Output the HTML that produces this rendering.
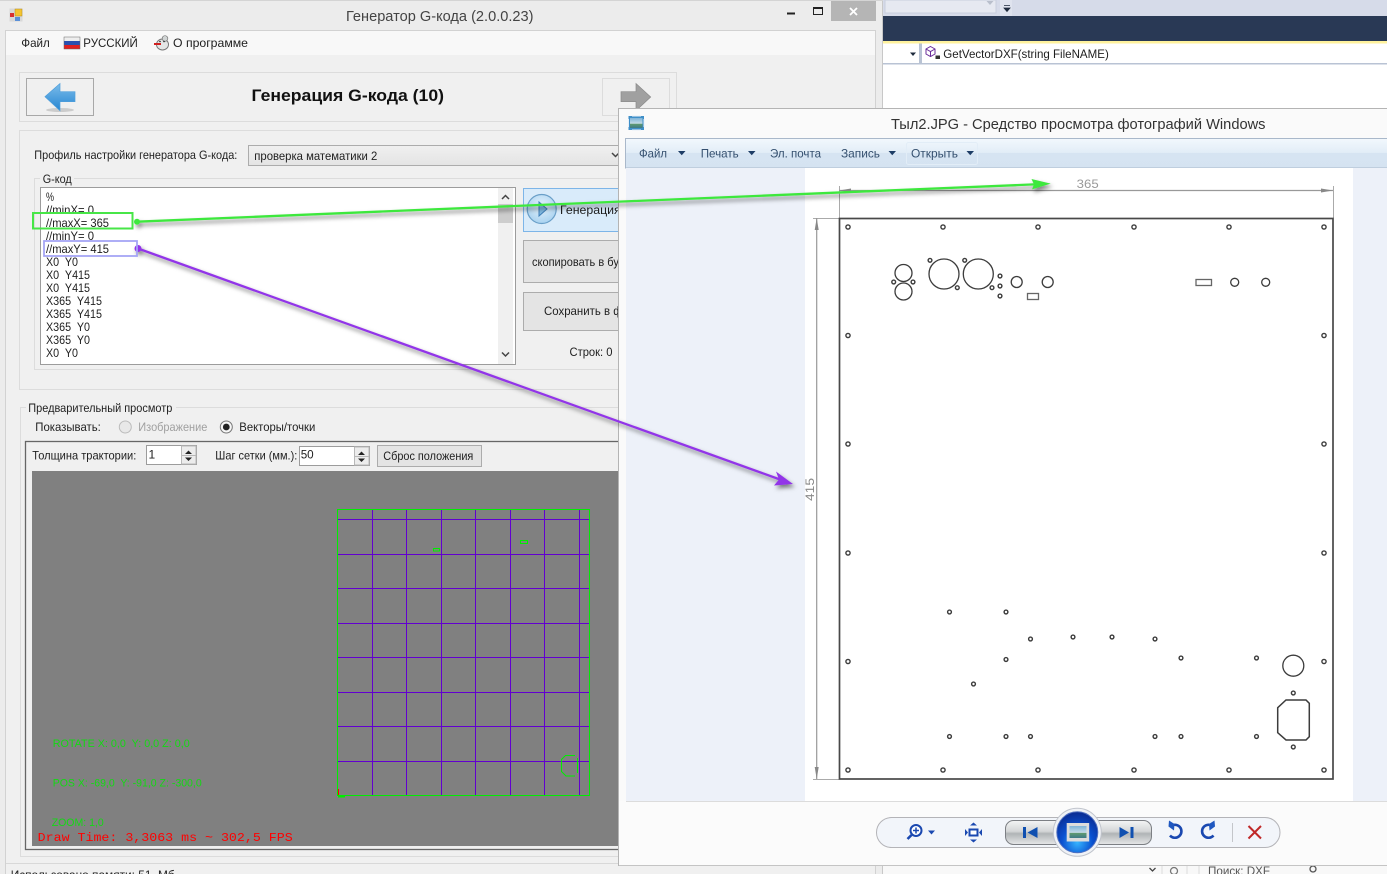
<!DOCTYPE html>
<html lang="ru"><head><meta charset="utf-8"><title>Генератор G-кода</title>
<style>
html,body{margin:0;padding:0;background:#fff;overflow:hidden}
svg{display:block;position:absolute;left:0;top:0}
text{font-family:"Liberation Sans","DejaVu Sans",sans-serif;font-size:12px;fill:#1e1e1e;white-space:pre}
.l{font-size:12px}
.m{fill:#35506f;font-size:12px}
.g{fill:#00e800;font-size:11px;opacity:.85}
</style></head><body>
<svg width="1387" height="874" viewBox="0 0 1387 874" xmlns="http://www.w3.org/2000/svg">
<defs>
<linearGradient id="tb" x1="0" y1="0" x2="0" y2="1"><stop offset="0" stop-color="#f2f8fd"/><stop offset=".48" stop-color="#e2edf7"/><stop offset=".5" stop-color="#d6e4f2"/><stop offset="1" stop-color="#d5e3f1"/></linearGradient>
<linearGradient id="cb" x1="0" y1="0" x2="0" y2="1"><stop offset="0" stop-color="#f0f0f0"/><stop offset="1" stop-color="#e4e4e4"/></linearGradient>
<linearGradient id="ar" x1="0" y1="0" x2="0" y2="1"><stop offset="0" stop-color="#7cbdea"/><stop offset="1" stop-color="#2585d2"/></linearGradient>
<linearGradient id="nav" x1="0" y1="0" x2="0" y2="1"><stop offset="0" stop-color="#f4f5f5"/><stop offset=".45" stop-color="#d4d6d7"/><stop offset=".55" stop-color="#b0b4b6"/><stop offset="1" stop-color="#e6e7e8"/></linearGradient>
<radialGradient id="blue" cx=".5" cy=".75" r=".75"><stop offset="0" stop-color="#35b4ff"/><stop offset=".5" stop-color="#0a50d0"/><stop offset="1" stop-color="#0a2a90"/></radialGradient>
<linearGradient id="pic" x1="0" y1="0" x2="0" y2="1"><stop offset="0" stop-color="#7fb4d8"/><stop offset=".55" stop-color="#c4dbe6"/><stop offset=".6" stop-color="#5f9a70"/><stop offset="1" stop-color="#3d7a88"/></linearGradient>
<linearGradient id="flag" x1="0" y1="0" x2="0" y2="1"><stop offset="0" stop-color="#eee"/><stop offset=".33" stop-color="#eee"/><stop offset=".34" stop-color="#2a50b0"/><stop offset=".66" stop-color="#2a50b0"/><stop offset=".67" stop-color="#e02020"/><stop offset="1" stop-color="#e02020"/></linearGradient>
<radialGradient id="play" cx=".5" cy=".4" r=".6"><stop offset="0" stop-color="#e6f3fc"/><stop offset="1" stop-color="#a9d2f0"/></radialGradient>
<filter id="sh" x="-10%" y="-50%" width="120%" height="200%"><feDropShadow dx="2" dy="3" stdDeviation="2" flood-color="#000" flood-opacity=".5"/></filter>
</defs>

<!-- background application -->
<rect x="883" y="0" width="504" height="874" fill="#fff"/>
<rect x="883" y="0" width="504" height="16" fill="#d6dbe9"/>
<rect x="885" y="0" width="111" height="13" fill="#e6e9f1" stroke="#c8cedd"/>
<path d="M986.500 1h7l-3.500 4z" fill="#b9bfcc"/>
<rect x="1000" y="0" width="12" height="16" fill="#dfe3ee"/>
<path d="M1004 5.500h6M1004 8h6l-3 3.500z" fill="#1e2a3c" stroke="#1e2a3c" stroke-width=".8"/>
<rect x="883" y="16" width="504" height="25" fill="#293955"/>
<rect x="883" y="41" width="504" height="2.500" fill="#fff29d"/>
<rect x="883" y="43.500" width="504" height="20" fill="#fff"/>
<rect x="883" y="63" width="504" height="1.500" fill="#b9c3d4"/>
<rect x="919" y="43.500" width="3" height="20" fill="#b9c3d4"/>
<path d="M910 52.500h6l-3 3.500z" fill="#1e2a3c"/>
<path d="M930.500 46.500l4.500 2.500v5l-4.500 2.500-4.500-2.500v-5zM926 49l4.500 2.500 4.500-2.500M930.500 51.500v5" fill="none" stroke="#6a2c9a" stroke-width="1"/>
<rect x="935.500" y="55.500" width="4.500" height="3.500" fill="#333"/>
<text x="943.300" y="58" textLength="165.500" lengthAdjust="spacingAndGlyphs">GetVectorDXF(string FileNAME)</text>
<rect x="883" y="865" width="504" height="9" fill="#f8f8f8"/>
<path d="M1162 866v8M1187 866v8M1199 866v8" stroke="#ddd"/>
<path d="M1149.500 868l3 3 3-3" fill="none" stroke="#444" stroke-width="1.300"/>
<circle cx="1174" cy="871" r="3.500" fill="none" stroke="#777" stroke-width="1.300"/>
<text x="1208" y="875" textLength="62" lengthAdjust="spacingAndGlyphs" style="fill:#555">Поиск: DXF</text>
<circle cx="1313" cy="869" r="3" fill="none" stroke="#555" stroke-width="1.300"/>

<!-- left window -->
<rect x="0" y="0" width="883" height="874" fill="#ececec"/>
<path d="M882.500 0v874" stroke="#c8c8c8"/>
<path d="M0 .5h883" stroke="#d4d4d4"/>
<rect x="9.500" y="8.500" width="13" height="13" fill="#d8d8d8"/>
<rect x="15" y="9" width="7" height="7" fill="#f4c430" stroke="#b08a20" stroke-width=".5"/>
<rect x="10" y="13" width="4" height="4" fill="#d83030"/>
<rect x="15" y="17" width="5" height="4" fill="#5a90d8"/>
<text x="346" y="21" textLength="187.500" lengthAdjust="spacingAndGlyphs" style="font-size:15px;fill:#444">Генератор G-кода (2.0.0.23)</text>
<rect x="787" y="12.500" width="8" height="2" fill="#222"/>
<rect x="813.500" y="7.500" width="9" height="7" fill="none" stroke="#222" stroke-width="1"/><rect x="813" y="7" width="10" height="2" fill="#222"/>
<rect x="831" y="1" width="45" height="20" fill="#b5b5b5"/>
<path d="M850 8l7 7M857 8l-7 7" stroke="#fff" stroke-width="1.800"/>

<rect x="5.500" y="30.500" width="870" height="844" fill="#f0f0f0" stroke="#d2d2d2"/>
<rect x="6" y="31" width="869" height="24" fill="#f8f8f8"/>
<text x="21.300" y="47" textLength="28.500" lengthAdjust="spacingAndGlyphs">Файл</text>
<rect x="64" y="37" width="16" height="12" fill="url(#flag)" stroke="#666" stroke-width=".5"/>
<text x="83.300" y="47" textLength="54.500" lengthAdjust="spacingAndGlyphs">РУССКИЙ</text>
<ellipse cx="162.500" cy="44.500" rx="6" ry="5.500" fill="#e4e6e6" stroke="#777"/>
<circle cx="165" cy="38.500" r="2.800" fill="#d0d4d4" stroke="#777" stroke-width=".7"/>
<rect x="154" y="43" width="7" height="2" fill="#d02020"/>
<circle cx="160" cy="41.500" r=".8" fill="#222"/><circle cx="164" cy="41.500" r=".8" fill="#222"/>
<text x="173" y="47" textLength="75" lengthAdjust="spacingAndGlyphs">О программе</text>

<!-- panel 1 -->
<rect x="19.500" y="72.500" width="657" height="49" fill="#f0f0f0" stroke="#dcdcdc"/>
<rect x="26.500" y="78.500" width="67" height="37" fill="#f0f0f0" stroke="#a8a8a8"/>
<ellipse cx="60" cy="110" rx="14" ry="2" fill="#ccc"/>
<path d="M45 96.700L60 83.500v8.200h15v10H60v9z" fill="url(#ar)" stroke="#4f9fdc" stroke-width=".7"/>
<text x="251.500" y="101" textLength="192.500" lengthAdjust="spacingAndGlyphs" style="font-size:17px;font-weight:bold;fill:#111">Генерация G-кода (10)</text>
<rect x="602.500" y="78.500" width="67" height="37" fill="#f0f0f0" stroke="#dcdcdc"/>
<path d="M650.700 97L636 83.500v8.200h-15v10h15v9z" fill="#a0a0a0" stroke="#8a8a8a" stroke-width=".7"/>

<!-- panel 2 -->
<rect x="19.500" y="130.500" width="657" height="259" fill="#f0f0f0" stroke="#dcdcdc"/>
<text x="34.300" y="159" textLength="203" lengthAdjust="spacingAndGlyphs">Профиль настройки генератора G-кода:</text>
<rect x="248.500" y="145.500" width="430" height="20" fill="url(#cb)" stroke="#acacac"/>
<text x="254.300" y="160" textLength="123" lengthAdjust="spacingAndGlyphs">проверка математики 2</text>
<path d="M612 153l3.500 3.500 3.500-3.500" fill="none" stroke="#444" stroke-width="1.500"/>
<path d="M40 178.500H34.500V369.500H660M74 178.500H660" fill="none" stroke="#dcdcdc"/>
<text x="42.700" y="183" textLength="29" lengthAdjust="spacingAndGlyphs">G-код</text>
<rect x="40.500" y="187.500" width="475" height="177" fill="#fff" stroke="#9c9c9c"/>
<rect x="498" y="188" width="15" height="176" fill="#f0f0f0"/>
<rect x="498" y="204" width="15" height="19" fill="#cdcdcd"/>
<path d="M502 199l3.500-3.500 3.500 3.500M502 352.500l3.500 3.500 3.500-3.500" fill="none" stroke="#444" stroke-width="1.500"/>
<text x="46" y="201" textLength="8" lengthAdjust="spacingAndGlyphs">%</text>
<text x="46" y="214" textLength="48" lengthAdjust="spacingAndGlyphs">//minX= 0</text>
<text x="46" y="227" textLength="63" lengthAdjust="spacingAndGlyphs">//maxX= 365</text>
<text x="46" y="240" textLength="48" lengthAdjust="spacingAndGlyphs">//minY= 0</text>
<text x="46" y="253" textLength="63" lengthAdjust="spacingAndGlyphs">//maxY= 415</text>
<text x="46" y="266" textLength="32" lengthAdjust="spacingAndGlyphs">X0  Y0</text>
<text x="46" y="279" textLength="44" lengthAdjust="spacingAndGlyphs">X0  Y415</text>
<text x="46" y="292" textLength="44" lengthAdjust="spacingAndGlyphs">X0  Y415</text>
<text x="46" y="305" textLength="56" lengthAdjust="spacingAndGlyphs">X365  Y415</text>
<text x="46" y="318" textLength="56" lengthAdjust="spacingAndGlyphs">X365  Y415</text>
<text x="46" y="331" textLength="44" lengthAdjust="spacingAndGlyphs">X365  Y0</text>
<text x="46" y="344" textLength="44" lengthAdjust="spacingAndGlyphs">X365  Y0</text>
<text x="46" y="357" textLength="32" lengthAdjust="spacingAndGlyphs">X0  Y0</text>

<rect x="523.500" y="188.500" width="110" height="43" fill="#d9ebfa" stroke="#7db5e8"/>
<circle cx="541.700" cy="209" r="14.500" fill="url(#play)" stroke="#6a9fc8" stroke-width="1.200"/>
<path d="M539 202v14l8-7z" fill="#7fb8e0" stroke="#3f7fb8"/>
<text x="560" y="214" textLength="104" lengthAdjust="spacingAndGlyphs">Генерация G-кода</text>
<rect x="523.500" y="240.500" width="110" height="42" fill="#e4e4e4" stroke="#acacac"/>
<text x="532" y="266" textLength="108" lengthAdjust="spacingAndGlyphs">скопировать в буфер</text>
<rect x="523.500" y="292.500" width="110" height="38" fill="#e4e4e4" stroke="#acacac"/>
<text x="544" y="315" textLength="98" lengthAdjust="spacingAndGlyphs">Сохранить в файл</text>
<text x="569.500" y="356" textLength="43" lengthAdjust="spacingAndGlyphs">Строк: 0</text>

<!-- preview -->
<path d="M26 407.500H20.500V856.500H875M176 407.500H875" fill="none" stroke="#dcdcdc"/>
<text x="28.300" y="412" textLength="144" lengthAdjust="spacingAndGlyphs">Предварительный просмотр</text>
<text x="35.300" y="431" textLength="65.500" lengthAdjust="spacingAndGlyphs">Показывать:</text>
<circle cx="125.300" cy="427" r="6" fill="#e8e8e8" stroke="#bcbcbc"/>
<text x="138.300" y="431" textLength="69" lengthAdjust="spacingAndGlyphs" style="fill:#a0a0a0">Изображение</text>
<circle cx="226.300" cy="427" r="6" fill="#f6f6f6" stroke="#777"/>
<circle cx="226.300" cy="427" r="3.400" fill="#222"/>
<text x="239.300" y="431" textLength="76" lengthAdjust="spacingAndGlyphs">Векторы/точки</text>
<rect x="25.500" y="441.500" width="680" height="408" fill="#f0f0f0" stroke="#666" stroke-width="1.300"/>
<text x="32.300" y="459.500" textLength="104" lengthAdjust="spacingAndGlyphs">Толщина трактории:</text>
<rect x="146.500" y="445.500" width="50" height="19" fill="#fff" stroke="#9c9c9c"/>
<text x="148.500" y="458.500">1</text>
<rect x="181.500" y="446" width="14.500" height="18" fill="#ececec" stroke="#b8b8b8"/>
<path d="M185 454l3.500-3.500 3.500 3.500zM185 457.500l3.500 3.500 3.500-3.500z" fill="#222"/><path d="M181.500 455.500h14.500" stroke="#b8b8b8"/>
<text x="215.300" y="459.500" textLength="82" lengthAdjust="spacingAndGlyphs">Шаг сетки (мм.):</text>
<rect x="299.500" y="446.500" width="70" height="19" fill="#fff" stroke="#9c9c9c"/>
<text x="300.700" y="458.500" textLength="13" lengthAdjust="spacingAndGlyphs">50</text>
<rect x="354.500" y="447" width="14.500" height="18" fill="#ececec" stroke="#b8b8b8"/>
<path d="M358 455l3.500-3.500 3.500 3.500zM358 458.500l3.500 3.500 3.500-3.500z" fill="#222"/><path d="M354.500 456.500h14.500" stroke="#b8b8b8"/>
<rect x="377.500" y="445.500" width="104" height="21" fill="#e4e4e4" stroke="#acacac"/>
<text x="383.300" y="460" textLength="90" lengthAdjust="spacingAndGlyphs">Сброс положения</text>
<rect x="32" y="471" width="660" height="375" fill="#808080"/>

<!-- grid -->
<g shape-rendering="crispEdges" fill="none">
<path d="M372.500 510v285M406.500 510v285M441.500 510v285M475.500 510v285M510.500 510v285M544.500 510v285M579.500 510v285M338 519.500h251M338 554.500h251M338 588.500h251M338 623.500h251M338 657.500h251M338 692.500h251M338 726.500h251M338 761.500h251" stroke="#6200d0"/>
<rect x="337.500" y="509.500" width="252" height="286" stroke="#00ee00"/>
<rect x="433.500" y="548.500" width="6" height="2.500" stroke="#00ee00"/>
<rect x="520.500" y="540.500" width="7" height="3" stroke="#00ee00"/>
<path d="M577.500 758v15" stroke="#00ee00"/>
<path d="M338.500 789v6" stroke="#f00"/>
<path d="M338 796.500h7" stroke="#00ee00" stroke-width="1.500"/>
</g>
<path d="M575 755.500h-9.500l-4 4v12l4.500 4.500h9" fill="none" stroke="#00ee00"/>
<text class="g" x="52.700" y="747" textLength="137" lengthAdjust="spacingAndGlyphs">ROTATE X: 0,0  Y: 0,0 Z: 0,0</text>
<text class="g" x="52.700" y="786.300" textLength="149" lengthAdjust="spacingAndGlyphs">POS X: -69,0  Y: -91,0 Z: -300,0</text>
<text class="g" x="51.700" y="826" textLength="52" lengthAdjust="spacingAndGlyphs">ZOOM: 1,0</text>
<text x="37.700" y="841" textLength="255" lengthAdjust="spacingAndGlyphs" style="font-family:'Liberation Mono',monospace;font-size:11.500px;fill:#f00">Draw Time: 3,3063 ms ~ 302,5 FPS</text>

<!-- status bar -->
<path d="M6 863.500h870" stroke="#d8d8d8"/>
<text x="10.700" y="879" textLength="164" lengthAdjust="spacingAndGlyphs">Использовано памяти: 51, Мб</text>

<!-- photo viewer window -->
<rect x="618.500" y="108.500" width="775" height="757" fill="#fafafa" stroke="#b4b4b4"/>
<rect x="628.500" y="116" width="15.500" height="14" fill="#3f8fc8"/>
<rect x="630" y="118" width="12.500" height="10" fill="url(#pic)"/>
<path d="M632 116h9M632 130h9M628.500 119v8M644 119v8" stroke="#e8f0f8"/>
<text x="891" y="129" textLength="374.500" lengthAdjust="spacingAndGlyphs" style="font-size:15px;fill:#333">Тыл2.JPG - Средство просмотра фотографий Windows</text>
<rect x="625.500" y="138.500" width="770" height="29.500" fill="url(#tb)" stroke="#a9b8ca"/>
<rect x="906.500" y="142.500" width="71" height="22" rx="2" fill="none" stroke="#e2edf7"/>
<text class="m" x="639" y="157.700" textLength="28" lengthAdjust="spacingAndGlyphs">Файл</text>
<path d="M678 151h7.500l-3.750 4.200z" fill="#1d3d66"/>
<text class="m" x="700.700" y="157.700" textLength="38" lengthAdjust="spacingAndGlyphs">Печать</text>
<path d="M748 151h7.500l-3.750 4.200z" fill="#1d3d66"/>
<text class="m" x="770" y="157.700" textLength="51" lengthAdjust="spacingAndGlyphs">Эл. почта</text>
<text class="m" x="841" y="157.700" textLength="39" lengthAdjust="spacingAndGlyphs">Запись</text>
<path d="M888.500 151h7.500l-3.750 4.200z" fill="#1d3d66"/>
<text class="m" x="911" y="157.700" textLength="47" lengthAdjust="spacingAndGlyphs">Открыть</text>
<path d="M966.500 151h7.500l-3.750 4.200z" fill="#1d3d66"/>

<rect x="626" y="168" width="761" height="633" fill="#edf1f9"/>
<rect x="805" y="168" width="548" height="633" fill="#fff"/>

<!-- drawing -->
<g fill="none" stroke="#aaa" stroke-width="1">
<path d="M839.500 186v32M1333.500 186v32M813 218.500h26M813 779.500h26"/>
<path d="M839 190.500h494M816.700 218v561" stroke="#999" stroke-width="1.200"/>
</g>
<path d="M839 190.500l12-2v4zM1333 190.500l-12-2v4zM816.700 218l-2 12h4zM816.700 779l-2-12h4z" fill="#888"/>
<text x="1076.700" y="188" textLength="22" lengthAdjust="spacingAndGlyphs" style="fill:#999">365</text>
<text transform="translate(814 501) rotate(-90)" textLength="23" lengthAdjust="spacingAndGlyphs" style="fill:#888">415</text>
<rect x="839.500" y="218.500" width="493.500" height="560.500" fill="#fff" stroke="#484848" stroke-width="1.700"/>
<g fill="none" stroke="#3c3c3c" stroke-width="1.300">
<g id="h" stroke-width="1.400">
<circle cx="848" cy="227" r="2.100"/><circle cx="943" cy="227" r="2.100"/><circle cx="1038" cy="227" r="2.100"/><circle cx="1134" cy="227" r="2.100"/><circle cx="1229" cy="227" r="2.100"/><circle cx="1324" cy="227" r="2.100"/>
<circle cx="848" cy="770" r="2.100"/><circle cx="943" cy="770" r="2.100"/><circle cx="1038" cy="770" r="2.100"/><circle cx="1134" cy="770" r="2.100"/><circle cx="1229" cy="770" r="2.100"/><circle cx="1324" cy="770" r="2.100"/>
<circle cx="848" cy="335.500" r="2.100"/><circle cx="848" cy="444" r="2.100"/><circle cx="848" cy="553" r="2.100"/><circle cx="848" cy="661.500" r="2.100"/>
<circle cx="1324" cy="335.500" r="2.100"/><circle cx="1324" cy="444" r="2.100"/><circle cx="1324" cy="553" r="2.100"/><circle cx="1324" cy="661.500" r="2.100"/>
<circle cx="949.500" cy="612" r="1.900"/><circle cx="1006" cy="612" r="1.900"/><circle cx="1030.500" cy="639" r="1.900"/><circle cx="1073" cy="637" r="1.900"/><circle cx="1112" cy="637" r="1.900"/><circle cx="1155" cy="639" r="1.900"/>
<circle cx="1006" cy="659.500" r="1.900"/><circle cx="1181" cy="658" r="1.900"/><circle cx="1256.500" cy="658" r="1.900"/><circle cx="973.500" cy="684" r="1.900"/>
<circle cx="949.500" cy="736.500" r="1.900"/><circle cx="1006" cy="736.500" r="1.900"/><circle cx="1030.500" cy="736.500" r="1.900"/><circle cx="1155" cy="736.500" r="1.900"/><circle cx="1181" cy="736.500" r="1.900"/><circle cx="1256.500" cy="736.500" r="1.900"/>
<circle cx="1293.300" cy="693" r="1.900"/><circle cx="1293.300" cy="747" r="1.900"/>
<circle cx="893.700" cy="282" r="1.900"/><circle cx="913" cy="282" r="1.900"/><circle cx="930" cy="260.300" r="1.900"/><circle cx="957.300" cy="287.700" r="1.900"/><circle cx="964.700" cy="260.300" r="1.900"/><circle cx="992" cy="287.700" r="1.900"/>
<circle cx="1000" cy="276" r="1.900"/><circle cx="1000" cy="286" r="1.900"/><circle cx="1000" cy="296" r="1.900"/>
</g>
<circle cx="903.500" cy="273" r="8.500"/><circle cx="903.500" cy="291.500" r="8.500"/>
<circle cx="944" cy="274" r="15"/><circle cx="978.300" cy="274" r="15"/>
<circle cx="1016.700" cy="282" r="5.500"/><circle cx="1047.700" cy="282" r="5.500"/>
<rect x="1027.500" y="293.500" width="11" height="6" stroke="#666"/>
<rect x="1196" y="279.500" width="15.500" height="6" stroke="#666"/>
<circle cx="1234.700" cy="282.300" r="4"/><circle cx="1265.700" cy="282.300" r="4"/>
<circle cx="1293.300" cy="665.700" r="10.500"/>
<path d="M1286 700h20l3.300 3.300v33.400l-3.300 3.300h-20l-8.300-7.300v-25z" stroke-width="1.500"/>
</g>

<!-- bottom bar -->
<rect x="619" y="801" width="768" height="64.500" fill="#fbfbfb"/>
<path d="M626 801.500h761" stroke="#dcdcdc"/>
<path d="M619 865.500h768" stroke="#c4c4c4"/>
<rect x="876.500" y="817.500" width="403.500" height="30" rx="15" fill="#f2f5fa" stroke="#b4b4b8"/>
<circle cx="916" cy="830.500" r="5.500" fill="#fff" stroke="#1a48b0" stroke-width="2"/>
<path d="M913 830.500h6M916 827.500v6" stroke="#1a48b0" stroke-width="1.500"/>
<path d="M911.500 835l-4 4" stroke="#1a48b0" stroke-width="2.600"/>
<path d="M928 830.500h7l-3.500 4z" fill="#1a48b0"/>
<rect x="969.500" y="829.500" width="8" height="6" fill="#fff" stroke="#1a48b0" stroke-width="2"/>
<path d="M965 829v7l3-3.500zM982 829v7l-3-3.500zM970 825.500h7l-3.500-3zM970 839.500h7l-3.500 3z" fill="#1a48b0"/>
<rect x="1005.500" y="820.500" width="146" height="24" rx="8" fill="url(#nav)" stroke="#7c7f84"/>
<rect x="1023" y="827" width="3" height="11" fill="#1050b0"/>
<path d="M1037.500 827v11l-10-5.500z" fill="#1050b0"/>
<path d="M1119.500 827v11l9.500-5.500z" fill="#1050b0"/>
<rect x="1130.500" y="827" width="3" height="11" fill="#1050b0"/>
<circle cx="1077.300" cy="832.300" r="24" fill="#f0f2f6" stroke="#c0c4cc"/>
<circle cx="1077.300" cy="832.300" r="20.500" fill="url(#blue)" stroke="#5070c0"/>
<rect x="1066.700" y="823" width="22.500" height="18.500" fill="#dcdcdc"/>
<rect x="1069.500" y="826" width="17" height="12" fill="url(#pic)"/>
<path d="M1170.500 826.500a6.500 6.500 0 1 1-.5 9" fill="none" stroke="#1a48b0" stroke-width="2.600"/>
<path d="M1169 820.500l5.500 3.500-.5 6.500-5.500-4z" fill="#2058c0"/>
<path d="M1213 826.500a6.500 6.500 0 1 0 .5 9" fill="none" stroke="#1a48b0" stroke-width="2.600"/>
<path d="M1214.500 820.500l-5.500 3.500.5 6.500 5.500-4z" fill="#2058c0"/>
<path d="M1232.500 823v19" stroke="#c4c6ca"/>
<path d="M1248.500 826l12.500 12.500M1261 826l-12.500 12.500" stroke="#c02828" stroke-width="2"/>

<!-- annotations -->
<g filter="url(#sh)">
<path d="M137 221.700L1034 184.400" stroke="#3ee83e" stroke-width="2.300" fill="none"/>
<path d="M1050.700 183.600L1031.500 179l2.500 5.400-2 5z" fill="#3ee83e"/>
<circle cx="137" cy="221.700" r="3" fill="#3ee83e"/>
</g>
<rect x="33" y="213" width="99.500" height="15.500" fill="none" stroke="#47e647" stroke-width="2"/>
<g filter="url(#sh)">
<path d="M138 248.500L780 479.500" stroke="#9236e8" stroke-width="2.300" fill="none"/>
<path d="M793 484L776 471.500l3 8-5 6z" fill="#9236e8"/>
<circle cx="138" cy="248.500" r="3.500" fill="#9236e8"/>
</g>
<rect x="44" y="241" width="93" height="15" fill="none" stroke="#a5a5f5" stroke-width="1.800"/>
</svg>
</body></html>
